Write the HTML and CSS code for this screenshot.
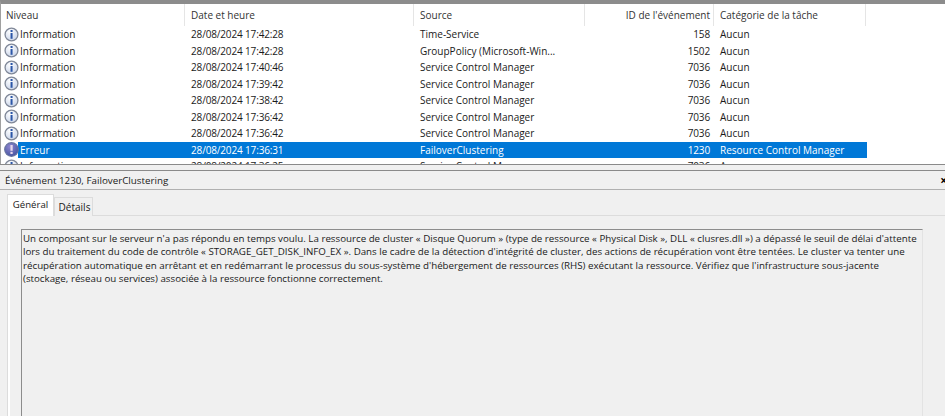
FILE: index.html
```html
<!DOCTYPE html>
<html lang="fr">
<head>
<meta charset="utf-8">
<title>Observateur d'événements</title>
<link rel="stylesheet" href="styles.css">
</head>
<body>
<svg class="defs" width="0" height="0" aria-hidden="true">
  <defs>
    <radialGradient id="info" cx="40%" cy="30%" r="80%"><stop offset="0" stop-color="#ffffff"/><stop offset="1" stop-color="#c3cfe6"/></radialGradient>
    <radialGradient id="err" cx="40%" cy="30%" r="80%"><stop offset="0" stop-color="#8f87d0"/><stop offset="1" stop-color="#3f4f9c"/></radialGradient>
  </defs>
  <symbol id="i-info" viewBox="0 0 14 14">
    <circle cx="7" cy="7" r="6" fill="url(#info)" stroke="#7f8797" stroke-width="1.2"/>
    <rect x="6.1" y="2.8" width="1.9" height="1.9" fill="#2b56a8"/>
    <rect x="6.1" y="5.6" width="1.9" height="5.4" fill="#2b56a8"/>
  </symbol>
  <symbol id="i-err" viewBox="0 0 14 14">
    <circle cx="7" cy="7" r="6.4" fill="url(#err)" stroke="#68749f" stroke-width="1"/>
    <rect x="6" y="2.8" width="2.1" height="5.4" fill="#e8d8ea"/>
    <rect x="6" y="9.2" width="2.1" height="2" fill="#e8d8ea"/>
  </symbol>
</svg>
<main class="window">
  <section class="list">
    <div class="row head">
      <div class="c niveau">Niveau</div>
      <div class="c date">Date et heure</div>
      <div class="c source">Source</div>
      <div class="c id">ID de l'événement</div>
      <div class="c cat">Catégorie de la tâche</div>
    </div>
    <div class="row"><div class="c niveau"><svg class="ic"><use href="#i-info"/></svg><span>Information</span></div><div class="c date num">28/08/2024 17:42:28</div><div class="c source">Time-Service</div><div class="c id num">158</div><div class="c cat">Aucun</div></div>
    <div class="row"><div class="c niveau"><svg class="ic"><use href="#i-info"/></svg><span>Information</span></div><div class="c date num">28/08/2024 17:42:28</div><div class="c source">GroupPolicy (Microsoft-Win...</div><div class="c id num">1502</div><div class="c cat">Aucun</div></div>
    <div class="row"><div class="c niveau"><svg class="ic"><use href="#i-info"/></svg><span>Information</span></div><div class="c date num">28/08/2024 17:40:46</div><div class="c source">Service Control Manager</div><div class="c id num">7036</div><div class="c cat">Aucun</div></div>
    <div class="row"><div class="c niveau"><svg class="ic"><use href="#i-info"/></svg><span>Information</span></div><div class="c date num">28/08/2024 17:39:42</div><div class="c source">Service Control Manager</div><div class="c id num">7036</div><div class="c cat">Aucun</div></div>
    <div class="row"><div class="c niveau"><svg class="ic"><use href="#i-info"/></svg><span>Information</span></div><div class="c date num">28/08/2024 17:38:42</div><div class="c source">Service Control Manager</div><div class="c id num">7036</div><div class="c cat">Aucun</div></div>
    <div class="row"><div class="c niveau"><svg class="ic"><use href="#i-info"/></svg><span>Information</span></div><div class="c date num">28/08/2024 17:36:42</div><div class="c source">Service Control Manager</div><div class="c id num">7036</div><div class="c cat">Aucun</div></div>
    <div class="row"><div class="c niveau"><svg class="ic"><use href="#i-info"/></svg><span>Information</span></div><div class="c date num">28/08/2024 17:36:42</div><div class="c source">Service Control Manager</div><div class="c id num">7036</div><div class="c cat">Aucun</div></div>
    <div class="row selected"><div class="c niveau"><svg class="ic"><use href="#i-err"/></svg><span class="sel-label">Erreur</span></div><div class="c date num">28/08/2024 17:36:31</div><div class="c source">FailoverClustering</div><div class="c id num">1230</div><div class="c cat">Resource Control Manager</div></div>
    <div class="row"><div class="c niveau"><svg class="ic"><use href="#i-info"/></svg><span>Information</span></div><div class="c date num">28/08/2024 17:36:25</div><div class="c source">Service Control Manager</div><div class="c id num">7036</div><div class="c cat">Aucun</div></div>
  </section>
  <section class="detail">
    <header class="title"><span>Événement 1230, FailoverClustering</span><span class="close">×</span></header>
    <nav class="tabs">
      <div class="tab active">Général</div>
      <div class="tab">Détails</div>
    </nav>
    <div class="page">
      <div class="desc">Un composant sur le serveur n'a pas répondu en temps voulu. La ressource de cluster « Disque Quorum » (type de ressource « Physical Disk », DLL « clusres.dll ») a dépassé le seuil de délai d'attente<br>lors du traitement du code de contrôle « STORAGE_GET_DISK_INFO_EX ». Dans le cadre de la détection d'intégrité de cluster, des actions de récupération vont être tentées. Le cluster va tenter une<br>récupération automatique en arrêtant et en redémarrant le processus du sous-système d'hébergement de ressources (RHS) exécutant la ressource. Vérifiez que l'infrastructure sous-jacente<br>(stockage, réseau ou services) associée à la ressource fonctionne correctement.</div>
    </div>
  </section>
</main>
</body>
</html>
```
FILE: styles.css
```css
* { box-sizing: border-box; }
html, body { margin: 0; padding: 0; }
body {
  width: 945px;
  height: 416px;
  overflow: hidden;
  background: #f0f0f0;
  color: #1a1a1a;
  font-family: "Open Sans", "Noto Sans", sans-serif;
  font-size: 10px;
}
.defs { position: absolute; }
.window { display: flex; flex-direction: column; height: 416px; }
.list {
  height: 164px;
  flex: none;
  overflow: hidden;
  background: #fff;
  border-top: 4px solid #8c8c8c;
  border-left: 1px solid #a0a0a0;
}
.row { display: flex; height: 16.5px; line-height: 16.5px; width: 866px; }
.row.head { height: 22px; line-height: 22px; color: #333; }
.row.head .c { border-right: 1px solid #e5e5e5; }
.c { flex: none; white-space: nowrap; padding-left: 5px; }
.num { letter-spacing: -0.15px; }
.niveau { width: 184px; display: flex; align-items: center; gap: 1px; padding-left: 3px; }
.head .niveau { padding-left: 5px; }
.date { width: 229px; padding-left: 6px; }
.source { width: 171px; padding-left: 6px; }
.id { width: 129px; text-align: right; padding-right: 4px; }
.head .id { padding-right: 3px; }
.cat { width: 152px; padding-left: 6px; }
.ic { width: 15px; height: 15px; flex: none; }
.selected { background: #0078d7; color: #fff; }
.selected .niveau { background: linear-gradient(to right, #fff 0, #fff 17px, transparent 17px); }
.detail { flex: 1; display: flex; flex-direction: column; min-height: 0; border-top: 1px solid #8a8a8a; padding-top: 5px; }
.title {
  flex: none;
  height: 20px;
  padding-left: 5px;
  display: flex;
  justify-content: space-between;
  align-items: center;
  font-size: 9.8px;
  border-top: 1px solid #8a8a8a;
  border-bottom: 1px solid #b0b0b0;
}
.close { font-weight: 700; margin-right: -2px; font-size: 12px; color: #000; }
.tabs { flex: none; display: flex; align-items: flex-end; height: 26px; padding-left: 7px; position: relative; z-index: 1; margin-bottom: -1px; }
.tab {
  width: 39px;
  height: 19px;
  line-height: 18px;
  padding-left: 2px;
  text-align: center;
  background: #f0f0f0;
  border: 1px solid #dcdcdc;
  border-bottom: none;
  margin-left: -1px;
}
.tab.active { width: 47px; height: 22px; line-height: 20px; padding-left: 0; font-size: 9.6px; background: #fff; margin-left: 0; margin-right: 1px; }
.page { flex: 1; min-height: 0; padding: 13px 22px 0 13px; margin-left: 7px; border-left: 1px solid #dcdcdc; border-top: 1px solid #dcdcdc; background: #f0f0f0; box-shadow: inset 2px 0 0 #fff; }
.desc {
  height: 100%;
  padding: 2px 0 0 1px;
  border: 1px solid #8c8c8c;
  border-bottom: none;
  border-right-color: #e3e3e3;
  font-size: 9.75px;
  line-height: 13.4px;
  white-space: nowrap;
}
```
